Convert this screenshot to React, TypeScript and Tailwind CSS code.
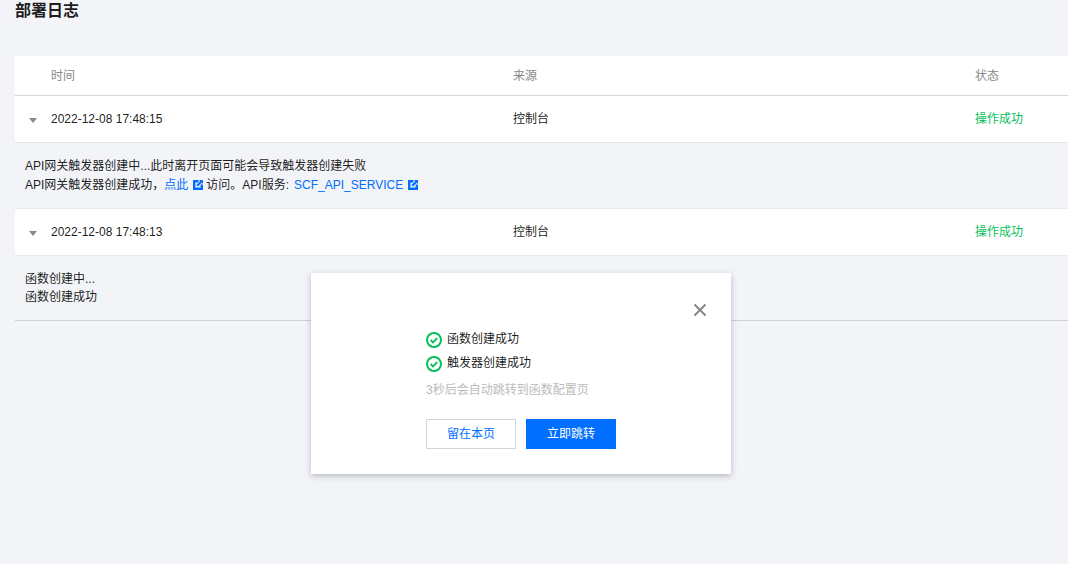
const FONT = "font-['Liberation_Sans','Noto_Sans_CJK_SC',sans-serif]";

function LinkIcon() {
  return (
    <svg viewBox="0 0 10 10" className="ml-[5px] mr-[3px] inline-block h-[10px] w-[10px] align-[-1px]" fill="#006eff">
      <path d="M0 0h5.5v2.4H2.4v5.2h5.2V4.5H10V10H0z" />
      <path d="M6 0h4v4L8.8 2.8 5 6.6 3.4 5l3.8-3.8z" />
    </svg>
  );
}

function CheckIcon() {
  return (
    <svg viewBox="0 0 16 16" className="-mt-[1px] h-4 w-4 shrink-0" fill="none" stroke="#0abf5b">
      <circle cx="8" cy="8" r="7" strokeWidth="2" />
      <path d="M4.6 8l2.4 2.4 4.3-4.3" strokeWidth="2" />
    </svg>
  );
}

function Row({ time, status }: { time: string; status: string }) {
  return (
    <div className="flex h-[47px] items-center border-b border-[#e6e8ee] bg-white text-xs text-[#000000e6]">
      <div className="flex w-[36px] justify-center">
        <span className="mt-[3px] h-0 w-0 border-x-[4px] border-t-[5px] border-x-transparent border-t-[#888888]" />
      </div>
      <div className="w-[462px]">{time}</div>
      <div className="w-[462px]">控制台</div>
      <div className="text-[#0abf5b]">{status}</div>
    </div>
  );
}

export default function App() {
  return (
    <div className={`relative h-[564px] w-[1068px] overflow-hidden bg-[#f3f4f8] ${FONT}`}>
      <h1 className="h-[56px] pl-[15px] pt-[2px] text-base leading-[18px] font-bold text-[#000000e6]">部署日志</h1>

      <div className="ml-[15px]">
        <div className="flex h-[40px] items-center border-b-[1.5px] border-[#d4d6de] bg-white text-xs text-[#888888]">
          <div className="w-[36px]" />
          <div className="w-[462px]">时间</div>
          <div className="w-[462px]">来源</div>
          <div>状态</div>
        </div>

        <Row time="2022-12-08 17:48:15" status="操作成功" />
        <div className="h-[66px] border-b border-[#e6e8ee] pl-[10px] pt-[14px] text-xs text-[#000000e6]">
          <div className="leading-[18px]">API网关触发器创建中...此时离开页面可能会导致触发器创建失败</div>
          <div className="leading-[20px]">
            API网关触发器创建成功，<span className="text-[#006eff]">点此</span>
            <LinkIcon />
            访问。API服务:<span className="ml-[5px] text-[#006eff]">SCF_API_SERVICE</span>
            <LinkIcon />
          </div>
        </div>

        <Row time="2022-12-08 17:48:13" status="操作成功" />
        <div className="h-[65px] border-b border-[#cfd1da] pl-[10px] pt-[14px] text-xs leading-[18px] text-[#000000e6]">
          <div>函数创建中...</div>
          <div>函数创建成功</div>
        </div>
      </div>

      {/* modal */}
      <div className="absolute left-[311px] top-[273px] h-[201px] w-[420px] bg-white pl-[115px] pt-[55px] shadow-[0_2px_6px_rgba(54,58,80,0.32)]">
        <button className="absolute right-[24px] top-[30px] text-[#888888]">
          <svg viewBox="0 0 14 14" className="h-[14px] w-[14px]" fill="none" stroke="currentColor" strokeWidth="2">
            <path d="M1.5 1.5l11 11M12.5 1.5l-11 11" />
          </svg>
        </button>
        <div className="flex h-[24px] items-center gap-[5px] text-xs text-[#000000e6]">
          <CheckIcon />
          <span className="-mt-[3px]">函数创建成功</span>
        </div>
        <div className="flex h-[24px] items-center gap-[5px] text-xs text-[#000000e6]">
          <CheckIcon />
          <span className="-mt-[3px]">触发器创建成功</span>
        </div>
        <p className="mt-[5px] text-xs leading-[18px] text-[#bbbbbb]">3秒后会自动跳转到函数配置页</p>
        <div className="mt-[20px] flex gap-[10px] text-xs">
          <button className="h-[30px] w-[90px] border border-[#cfd5de] bg-white text-[#006eff]">留在本页</button>
          <button className="h-[30px] w-[90px] bg-[#006eff] text-white">立即跳转</button>
        </div>
      </div>
    </div>
  );
}
